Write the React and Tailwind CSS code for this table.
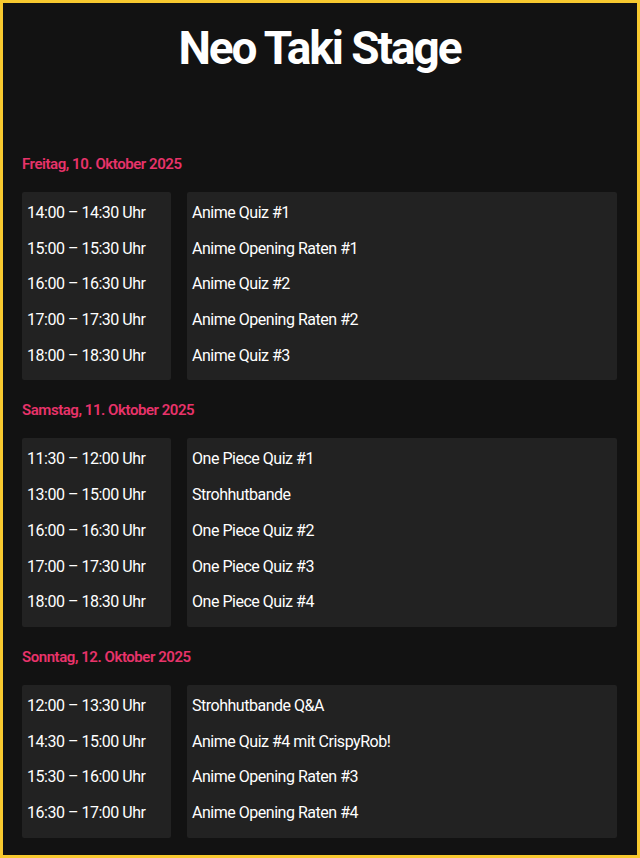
import React from 'react'

const days = [
  {
    title: 'Freitag, 10. Oktober 2025',
    slots: [
      ['14:00 – 14:30 Uhr', 'Anime Quiz #1'],
      ['15:00 – 15:30 Uhr', 'Anime Opening Raten #1'],
      ['16:00 – 16:30 Uhr', 'Anime Quiz #2'],
      ['17:00 – 17:30 Uhr', 'Anime Opening Raten #2'],
      ['18:00 – 18:30 Uhr', 'Anime Quiz #3'],
    ],
  },
  {
    title: 'Samstag, 11. Oktober 2025',
    slots: [
      ['11:30 – 12:00 Uhr', 'One Piece Quiz #1'],
      ['13:00 – 15:00 Uhr', 'Strohhutbande'],
      ['16:00 – 16:30 Uhr', 'One Piece Quiz #2'],
      ['17:00 – 17:30 Uhr', 'One Piece Quiz #3'],
      ['18:00 – 18:30 Uhr', 'One Piece Quiz #4'],
    ],
  },
  {
    title: 'Sonntag, 12. Oktober 2025',
    slots: [
      ['12:00 – 13:30 Uhr', 'Strohhutbande Q&A'],
      ['14:30 – 15:00 Uhr', 'Anime Quiz #4 mit CrispyRob!'],
      ['15:30 – 16:00 Uhr', 'Anime Opening Raten #3'],
      ['16:30 – 17:00 Uhr', 'Anime Opening Raten #4'],
    ],
  },
]

const Day = ({ day }) => (
  <section>
    <h2 className='mt-5 mb-[18px] h-5 leading-5 text-[15px] font-semibold tracking-[-0.03em] text-[#e8336a]'>
      {day.title}
    </h2>
    <div className='flex gap-4'>
      <div className='w-[149px] shrink-0 rounded-[2px] bg-[#222222] px-[5px] pt-[3px] pb-[7px]'>
        {day.slots.map((s) => (
          <div key={s[0]} className='h-[35.7px] leading-[35.7px] whitespace-nowrap'>{s[0]}</div>
        ))}
      </div>
      <div className='flex-1 rounded-[2px] bg-[#222222] px-[5px] pt-[3px] pb-[7px]'>
        {day.slots.map((s) => (
          <div key={s[1]} className='h-[35.7px] leading-[35.7px] whitespace-nowrap'>{s[1]}</div>
        ))}
      </div>
    </div>
  </section>
)

export default function App() {
  return (
    <main
      className='h-[858px] w-[640px] border-[3px] border-[#f7c92f] bg-[#121212] pl-[19px] pr-[20px] text-white'
      style={{ fontFamily: 'Roboto, "Noto Sans", sans-serif' }}
    >
      <h1 className='mt-[17px] h-14 text-center text-[46px] leading-[56px] font-bold tracking-[-0.045em]'>
        Neo Taki Stage
      </h1>
      <div className='mt-[78px] text-[16px] tracking-[-0.03em]'>
        {days.map((d, i) => (
          <Day key={i} day={d} />
        ))}
      </div>
    </main>
  )
}
